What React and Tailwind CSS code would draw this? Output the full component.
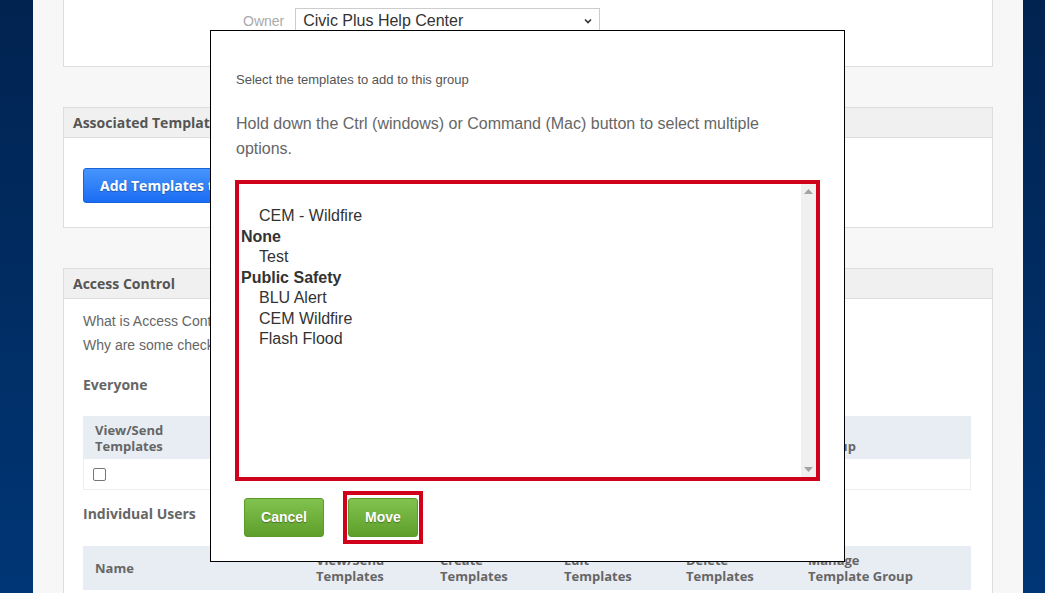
import React from 'react';

// Template group edit page with the "add templates" picker open on top.

const sans = "font-['Liberation_Sans',Arial,sans-serif]";
const open = "font-['Open_Sans',Arial,sans-serif]";

function PanelHeader({ children }) {
  return (
    <div className={`flex h-[31px] items-center border border-[#ddd] bg-[#f0f0f0] px-[9px] text-[14px] font-bold text-[#555] ${open}`}>
      {children}
    </div>
  );
}

function GreenButton({ children, className = '' }) {
  return (
    <button
      className={`h-[39px] rounded-[3px] border border-[#5c9a2c] bg-gradient-to-b from-[#82c34f] to-[#5e9f2b] text-[14px] font-bold text-white [text-shadow:0_1px_1px_rgba(0,0,0,0.35)] ${sans} ${className}`}
    >
      {children}
    </button>
  );
}

const groups = [
  { label: null, items: ['CEM - Wildfire'] },
  { label: 'None', items: ['Test'] },
  { label: 'Public Safety', items: ['BLU Alert', 'CEM Wildfire', 'Flash Flood'] },
];

const userCols = ['View/Send', 'Create', 'Edit', 'Delete'];

export default function App() {
  return (
    <div className="relative flex h-[593px] w-[1045px] overflow-hidden bg-gradient-to-b from-[#012350] to-[#003676]">
      <div className="ml-[33px] h-full w-[990px] bg-[#f7f7f7] px-[30px]">
        {/* owner panel, top cut off */}
        <div className="h-[67px] border-x border-b border-[#ddd] bg-white pl-[179px] pt-[8px]">
          <div className="flex items-center gap-[11px]">
            <span className={`text-[14px] text-[#aaa] ${sans}`}>Owner</span>
            <div className={`flex h-[26px] w-[305px] items-center justify-between border border-[#ccc] bg-white pl-[7px] pr-[6px] text-[16px] text-[#333] ${sans}`}>
              Civic Plus Help Center
              <svg width="10" height="10" viewBox="0 0 10 10">
                <path d="M2 3.5l3 3 3-3" fill="none" stroke="#333" strokeWidth="1.6" />
              </svg>
            </div>
          </div>
        </div>

        {/* associated templates */}
        <div className="mt-[40px]">
          <PanelHeader>Associated Templates</PanelHeader>
          <div className="h-[90px] border-x border-b border-[#ddd] bg-white pl-[19px] pt-[30px]">
            <button
              className={`h-[35px] rounded-[3px] border border-[#1862dc] bg-gradient-to-b from-[#4795fc] to-[#1a6cf4] px-[16px] text-[14px] font-bold text-white [text-shadow:0_1px_1px_rgba(0,0,0,0.3)] ${open}`}
            >
              Add Templates to Group
            </button>
          </div>
        </div>

        {/* access control */}
        <div className="mt-[40px]">
          <PanelHeader>Access Control</PanelHeader>
          <div className={`h-[400px] border-x border-[#ddd] bg-white pl-[19px] pr-[21px] text-[#666] ${sans}`}>
            <p className="pt-[12px] text-[14px] leading-[20px]">What is Access Control?</p>
            <p className="mt-[4px] text-[14px] leading-[20px]">Why are some checkboxes disabled?</p>
            <p className={`mt-[20px] text-[14px] font-bold leading-[20px] ${open}`}>Everyone</p>

            <div className={`mt-[21px] text-[13px] font-bold leading-[16px] text-[#666] ${open}`}>
              <div className="grid h-[43px] grid-cols-[164px_164px_164px_164px_1fr] items-center bg-[#e8edf3]">
                {['View/Send', 'Create', 'Edit', 'Delete'].map((c) => (
                  <div key={c} className="px-[12px]">
                    {c}
                    <br />
                    Templates
                  </div>
                ))}
                <div className="px-[12px]">
                  Manage
                  <br />
                  Template Group
                </div>
              </div>
              <div className="flex h-[31px] items-center border-x border-b border-[#eee] pl-[9px]">
                <span className="h-[13px] w-[13px] rounded-[2px] border border-[#767676] bg-white" />
              </div>
            </div>

            <p className={`mt-[14px] text-[14px] font-bold leading-[20px] ${open}`}>Individual Users</p>

            <div className={`mt-[22px] text-[13px] font-bold leading-[16px] text-[#666] ${open}`}>
              <div className="grid h-[44px] grid-cols-[221px_124px_124px_122px_122px_1fr] items-center bg-[#e8edf3]">
                <div className="px-[12px]">Name</div>
                {userCols.map((c) => (
                  <div key={c} className="px-[12px]">
                    {c}
                    <br />
                    Templates
                  </div>
                ))}
                <div className="px-[12px]">
                  Manage
                  <br />
                  Template Group
                </div>
              </div>
            </div>
          </div>
        </div>
      </div>

      {/* modal */}
      <div className={`absolute left-[210px] top-[30px] h-[532px] w-[635px] border border-black bg-white ${sans}`}>
        <p className="ml-[25px] mt-[41px] text-[13px] leading-[16px] text-[#555]">
          Select the templates to add to this group
        </p>
        <p className="ml-[25px] mt-[23px] w-[560px] text-[16px] leading-[25px] text-[#666]">
          Hold down the Ctrl (windows) or Command (Mac) button to select multiple options.
        </p>

        <div className="ml-[24px] mt-[19px] flex h-[301px] w-[585px] border-4 border-[#d0021b] bg-white">
          <div className="flex-1 pl-[2px] pt-[22px] text-[16px] leading-[20.5px] text-[#333]">
            {groups.map((g, i) => (
              <div key={i}>
                {g.label && <div className="font-bold">{g.label}</div>}
                {g.items.map((it) => (
                  <div key={it} className="pl-[18px]">
                    {it}
                  </div>
                ))}
              </div>
            ))}
          </div>
          <div className="flex w-[15px] flex-col items-center justify-between bg-[#f0f0f0] py-[5px]">
            <svg width="9" height="5" viewBox="0 0 9 5">
              <path d="M0 5L4.5 0L9 5Z" fill="#a3a3a3" />
            </svg>
            <svg width="9" height="5" viewBox="0 0 9 5">
              <path d="M0 0L4.5 5L9 0Z" fill="#a3a3a3" />
            </svg>
          </div>
        </div>

        <div className="ml-[33px] mt-[10px] flex items-center gap-[19px]">
          <GreenButton className="w-[80px]">Cancel</GreenButton>
          <div className="border-4 border-[#d0021b] px-px py-[3px]">
            <GreenButton className="w-[70px]">Move</GreenButton>
          </div>
        </div>
      </div>
    </div>
  );
}
